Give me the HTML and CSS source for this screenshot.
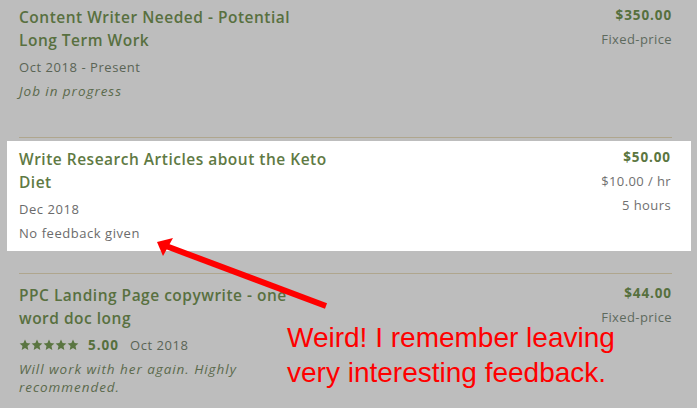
FILE: index.html
```html
<!DOCTYPE html>
<html>
<head>
<meta charset="utf-8">
<link rel="stylesheet" href="styles.css">
</head>
<body>
<div class="page">
  <div class="list">
    <div class="row row-first">
      <div class="row-main">
        <div class="title">Content Writer Needed - Potential Long Term Work</div>
        <div class="meta">Oct 2018 - Present</div>
        <div class="note">Job in progress</div>
      </div>
      <div class="row-side">
        <div class="amount">$350.00</div>
        <div class="sub">Fixed-price</div>
      </div>
    </div>

    <div class="row row-hl">
      <div class="hl">
        <div class="row-main">
          <div class="title">Write Research Articles about the Keto Diet</div>
          <div class="meta">Dec 2018</div>
          <div class="meta">No feedback given</div>
        </div>
        <div class="row-side">
          <div class="amount">$50.00</div>
          <div class="sub">$10.00 / hr</div>
          <div class="sub">5 hours</div>
        </div>
      </div>
    </div>

    <div class="row row-last">
      <div class="row-main">
        <div class="title">PPC Landing Page copywrite - one word doc long</div>
        <div class="rating">
          <span class="stars">
            <svg viewBox="0 0 12 12" class="star"><path d="M6 0.6l1.6 3.5 3.8 0.4-2.9 2.6 0.8 3.8L6 9l-3.3 1.9 0.8-3.8L0.6 4.5l3.8-0.4z"/></svg>
            <svg viewBox="0 0 12 12" class="star"><path d="M6 0.6l1.6 3.5 3.8 0.4-2.9 2.6 0.8 3.8L6 9l-3.3 1.9 0.8-3.8L0.6 4.5l3.8-0.4z"/></svg>
            <svg viewBox="0 0 12 12" class="star"><path d="M6 0.6l1.6 3.5 3.8 0.4-2.9 2.6 0.8 3.8L6 9l-3.3 1.9 0.8-3.8L0.6 4.5l3.8-0.4z"/></svg>
            <svg viewBox="0 0 12 12" class="star"><path d="M6 0.6l1.6 3.5 3.8 0.4-2.9 2.6 0.8 3.8L6 9l-3.3 1.9 0.8-3.8L0.6 4.5l3.8-0.4z"/></svg>
            <svg viewBox="0 0 12 12" class="star"><path d="M6 0.6l1.6 3.5 3.8 0.4-2.9 2.6 0.8 3.8L6 9l-3.3 1.9 0.8-3.8L0.6 4.5l3.8-0.4z"/></svg>
          </span>
          <span class="score">5.00</span>
          <span class="date">Oct 2018</span>
        </div>
        <div class="note feedback">Will work with her again. Highly recommended.</div>
      </div>
      <div class="row-side">
        <div class="amount">$44.00</div>
        <div class="sub">Fixed-price</div>
      </div>
    </div>
  </div>

  <svg class="arrow" width="697" height="408" viewBox="0 0 697 408">
    <line x1="326" y1="306" x2="166" y2="246" stroke="#ff0000" stroke-width="6"/>
    <polygon points="157,242 173,238 163,256" fill="#ff0000"/>
  </svg>
  <div class="callout">Weird! I remember leaving<br>very interesting feedback.</div>
</div>
</body>
</html>
```

FILE: styles.css
```css
* { box-sizing: border-box; }
html, body { margin: 0; padding: 0; }
body {
  background: #bdbdbd;
  font-family: "Open Sans", "DejaVu Sans", sans-serif;
  width: 697px;
  height: 408px;
  overflow: hidden;
}
.page { position: relative; width: 697px; height: 408px; }
.list { padding: 0 25px 0 19px; }
.row {
  display: flex;
  justify-content: space-between;
  border-bottom: 1px solid #afa68e;
}
.row-first { padding: 6px 0 34px; }
.row-hl { padding: 3px 0 22px; }
.row-last { padding: 10px 0 0; border-bottom: none; }
.hl {
  flex: 1;
  display: flex;
  justify-content: space-between;
  background: #ffffff;
  margin: 0 -19px 0 -12px;
  padding: 7px 20px 6px 12px;
}
.row-main { width: 312px; }
.row-side { text-align: right; margin-top: -3px; }
.title {
  font-size: 15.5px;
  line-height: 23px;
  font-weight: 600;
  color: #587040;
  letter-spacing: 0.5px;
  margin-bottom: 3px;
}
.hl .title { color: #5f7a44; }
.meta {
  font-size: 13px;
  line-height: 24px;
  color: #5a6455;
  letter-spacing: 0.55px;
}
.hl .meta { color: #6b6b6b; }
.note {
  font-size: 13.5px;
  line-height: 24px;
  font-style: italic;
  color: #5b6a4c;
  letter-spacing: 0.95px;
}
.feedback { width: 245px; line-height: 18px; margin-top: 3px; }
.amount {
  font-size: 13.5px;
  line-height: 24px;
  font-weight: 700;
  color: #56703d;
  letter-spacing: 0.9px;
}
.hl .amount { color: #5b763f; }
.sub {
  font-size: 13px;
  line-height: 24px;
  color: #5d6a5d;
  letter-spacing: 0.4px;
}
.hl .sub { color: #707070; }
.rating {
  display: flex;
  align-items: center;
  height: 24px;
  font-size: 13px;
}
.stars { display: flex; gap: 0; margin-right: 9px; }
.star { width: 12px; height: 12px; fill: #5a7541; }
.score { font-size: 13.5px; font-weight: 700; color: #56703d; margin-right: 11px; letter-spacing: 1px; }
.date { color: #5a6455; letter-spacing: 0.55px; }
.arrow { position: absolute; left: 0; top: 0; pointer-events: none; }
.callout {
  position: absolute;
  left: 287px;
  top: 320px;
  font-family: "Liberation Sans", Arial, sans-serif;
  font-size: 28px;
  line-height: 35px;
  color: #ff0000;
  white-space: nowrap;
}
```
